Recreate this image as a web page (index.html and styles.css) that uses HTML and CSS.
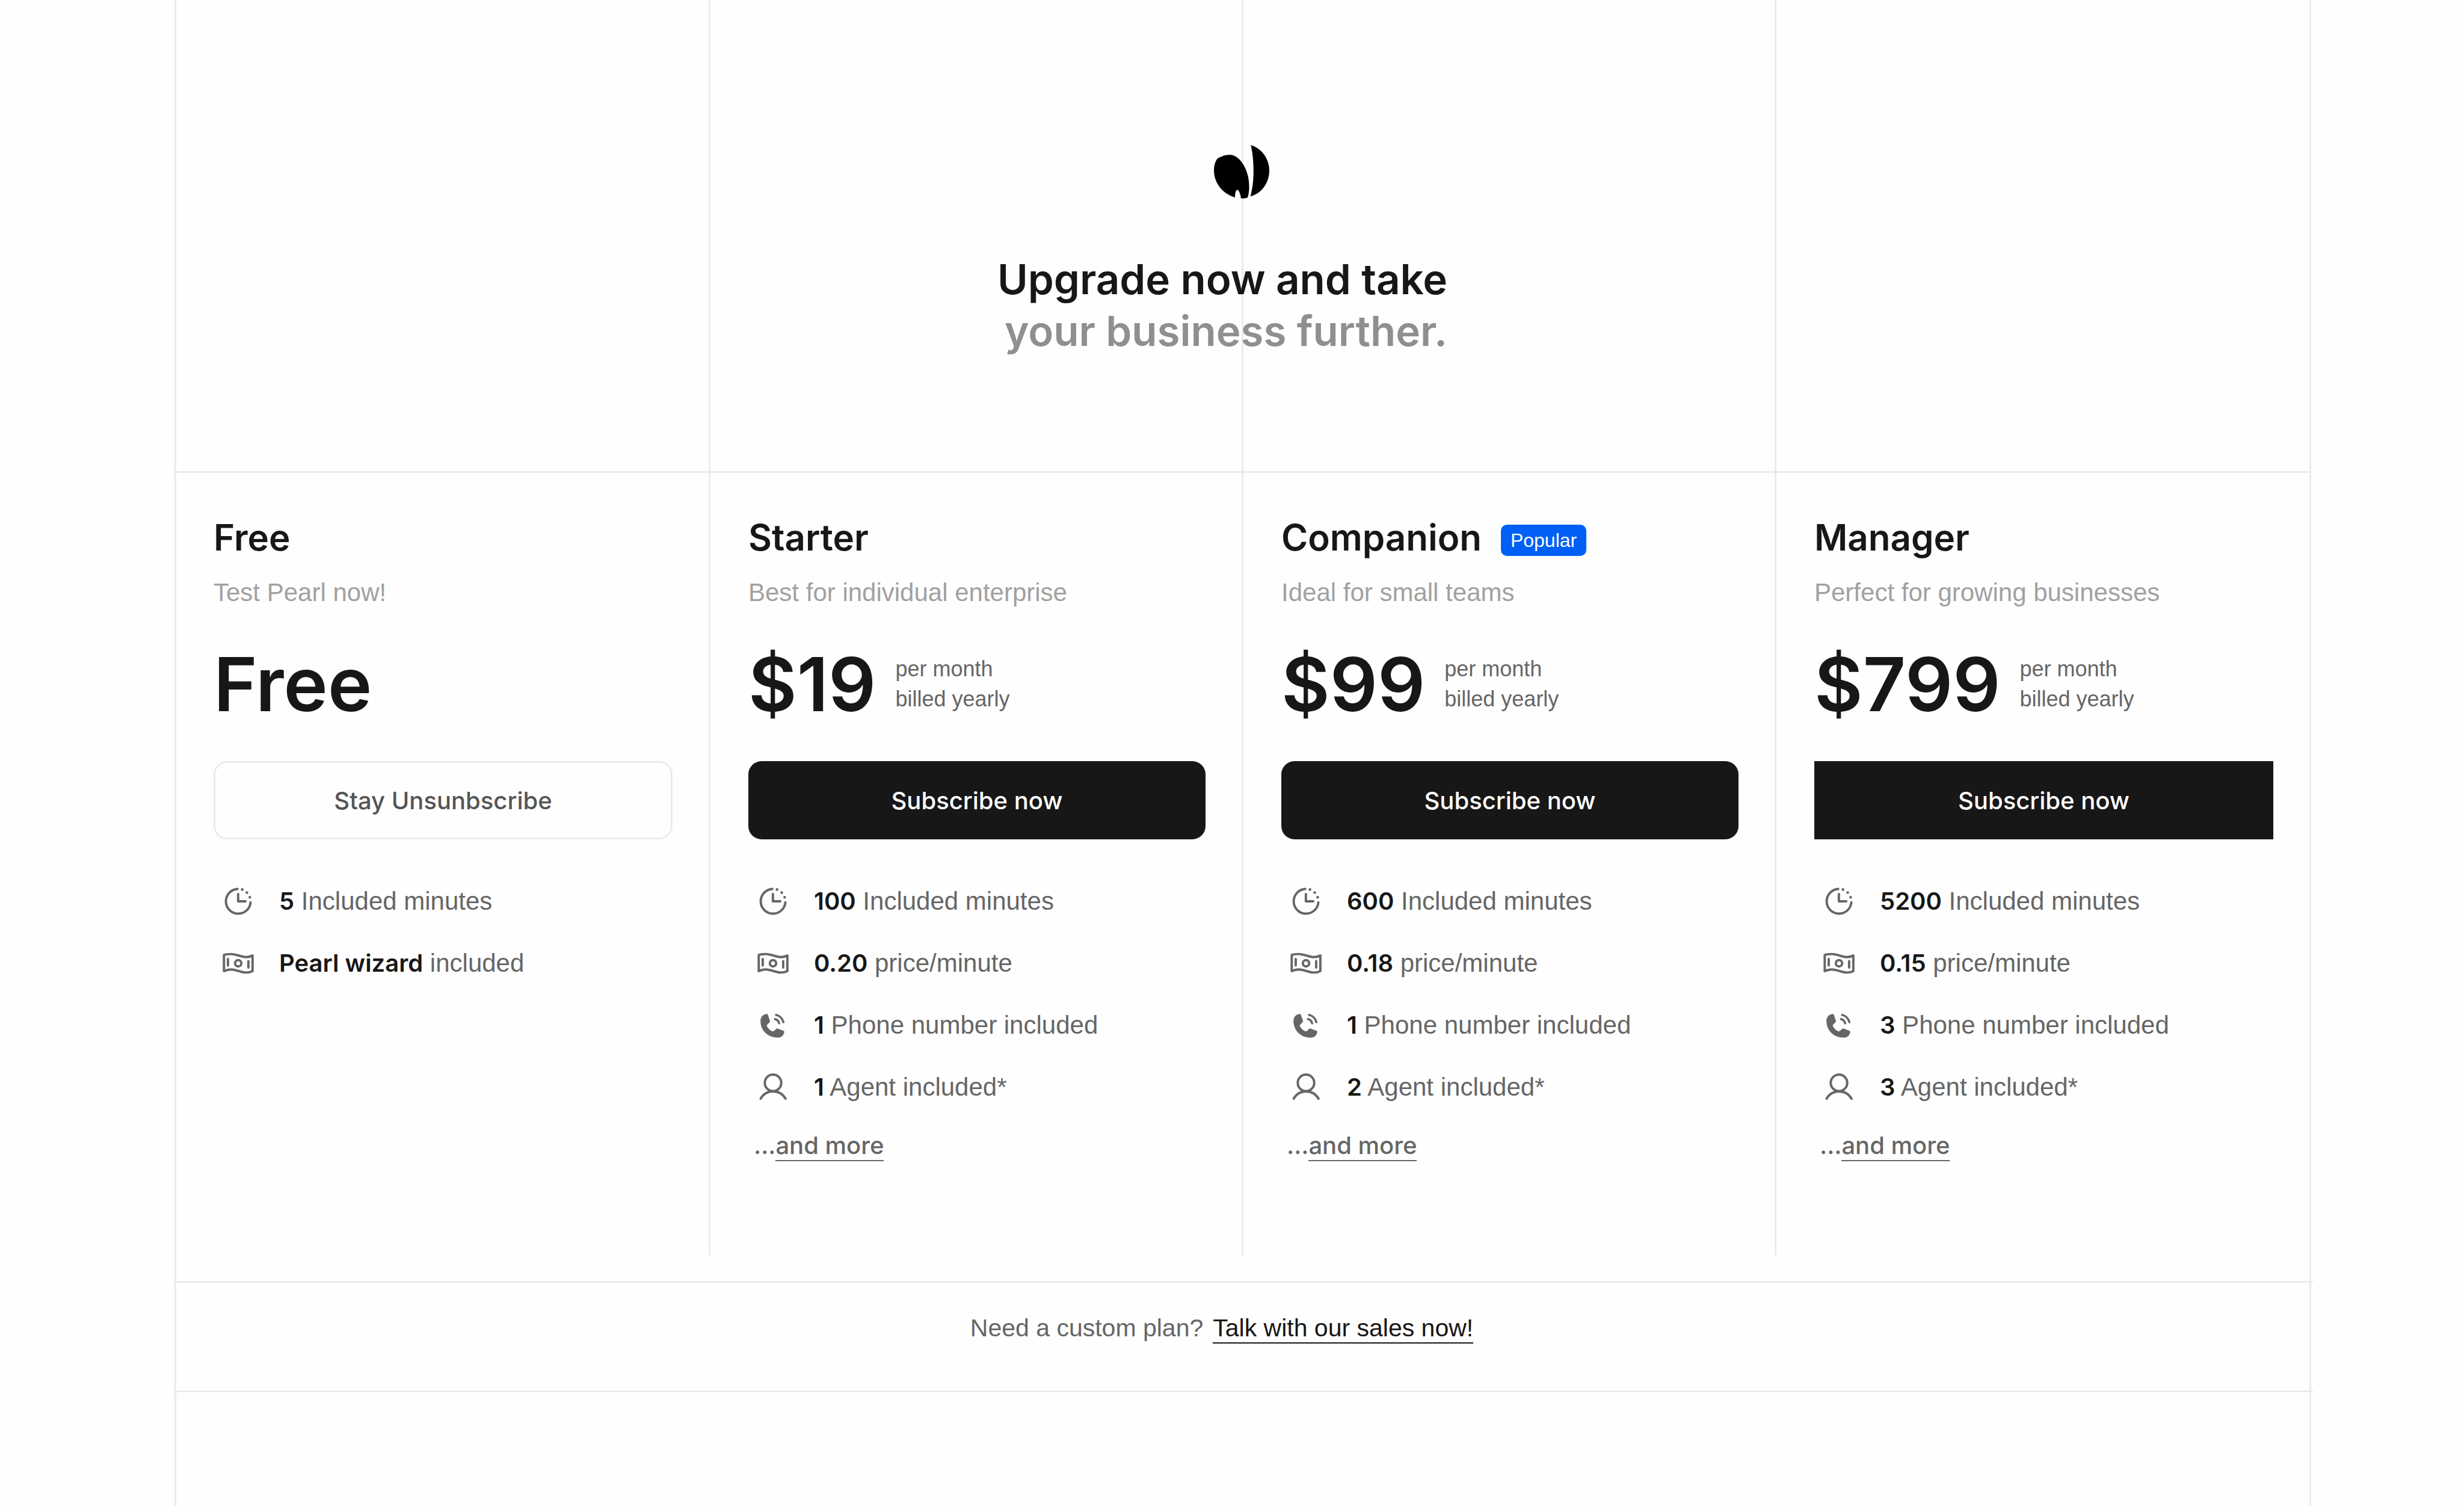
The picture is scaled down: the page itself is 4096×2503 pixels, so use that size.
FILE: index.html
```html
<!DOCTYPE html>
<html lang="en">
<head>
<meta charset="utf-8">
<title>Upgrade</title>
<link rel="stylesheet" href="styles.css">
</head>
<body>
<svg class="sprite" aria-hidden="true">
  <symbol id="clock" viewBox="29 41 212 212"><g fill="none" stroke="currentColor" stroke-width="13" stroke-linecap="round" stroke-linejoin="round"><path d="M131 79A68 68 0 1 0 203 153M134.500 107V147H175"/></g><g fill="currentColor"><circle cx="157" cy="82" r="7.500"/><circle cx="183" cy="99" r="7.500"/><circle cx="199" cy="125" r="7.500"/></g></symbol>
  <symbol id="money" viewBox="29 383 212 212"><g fill="none" stroke="currentColor" stroke-width="13" stroke-linecap="round" stroke-linejoin="round"><path d="M56.500 443C70 438 82 438 95 438C125 438 150 455 178 455C190 455 202 453 214 446V532C202 538 190 540 178 540C150 540 125 523 95 523C82 523 70 526 56.500 532ZM78.500 466V501M191 477V512"/><circle cx="135" cy="489" r="17.500"/></g></symbol>
  <symbol id="phone" viewBox="29 725 212 212"><path fill="currentColor" d="M99 769C103 768 106 770 107 774L118 806C119 809 118 811 117 813L102 829C100 832 100 834 102 837C107 848 118 859 131 864C133 865 136 864 138 863L154 850C156 848 159 848 161 849L193 862C196 863 198 866 197 869C193 889 179 900 160 899C104 899 66 858 66 806C66 786 80 771 99 769Z"/><path fill="none" stroke="currentColor" stroke-width="12" stroke-linecap="round" d="M152 774C171 778 187 794 192 814M146 797C158 800 166 809 169 820"/></symbol>
  <symbol id="person" viewBox="29 1067 212 212"><g fill="none" stroke="currentColor" stroke-width="13" stroke-linecap="round"><circle cx="135" cy="1149" r="45.500"/><path d="M67 1236C82 1210 106 1196 135 1196C164 1196 189 1210 204 1236"/></g></symbol>
</svg>

<main class="frame">
  <div class="board">
    <div class="lane col-1"></div>
    <div class="lane col-2"></div>
    <div class="lane col-3"></div>
    <div class="lane col-4"></div>

    <header class="hero">
      <svg class="logo" viewBox="105 80 305 295" role="img" aria-label="Pearl"><path d="M125 154C145 142 170 134 191 134C224 134 248 160 262 180C286 215 299 260 299 310C299 335 296 352 291 369C280 373 265 375 254 374C252 355 243 327 234 327C225 327 221 350 221 369C154 350 105 290 105 222C105 195 111 172 125 154Z"/><path d="M308 81C365 95 410 155 410 220C410 290 366 348 306 363C320 310 323 265 323 225C323 170 318 120 308 81Z"/></svg>
      <h1 class="headline">Upgrade now and take<br><span class="headline-soft">your business further.</span></h1>
    </header>

    <section class="plan col-1">
      <div class="plan-head"><h2 class="plan-name">Free</h2></div>
      <p class="plan-desc">Test Pearl now!</p>
      <div class="price"><strong class="amount">Free</strong></div>
      <button class="cta cta-outline" type="button">Stay Unsunbscribe</button>
      <ul class="features">
        <li class="feature"><svg class="icon"><use href="#clock"/></svg><span><b>5</b> Included minutes</span></li>
        <li class="feature"><svg class="icon"><use href="#money"/></svg><span><b>Pearl wizard</b> included</span></li>
      </ul>
    </section>

    <section class="plan col-2">
      <div class="plan-head"><h2 class="plan-name">Starter</h2></div>
      <p class="plan-desc">Best for individual enterprise</p>
      <div class="price"><strong class="amount">$19</strong><span class="period">per month<br>billed yearly</span></div>
      <button class="cta" type="button">Subscribe now</button>
      <ul class="features">
        <li class="feature"><svg class="icon"><use href="#clock"/></svg><span><b>100</b> Included minutes</span></li>
        <li class="feature"><svg class="icon"><use href="#money"/></svg><span><b>0.20</b> price/minute</span></li>
        <li class="feature"><svg class="icon"><use href="#phone"/></svg><span><b>1</b> Phone number included</span></li>
        <li class="feature"><svg class="icon"><use href="#person"/></svg><span><b>1</b> Agent included*</span></li>
      </ul>
      <p class="more">...<a class="more-link" href="#">and more</a></p>
    </section>

    <section class="plan col-3">
      <div class="plan-head"><h2 class="plan-name">Companion</h2><span class="badge">Popular</span></div>
      <p class="plan-desc">Ideal for small teams</p>
      <div class="price"><strong class="amount">$99</strong><span class="period">per month<br>billed yearly</span></div>
      <button class="cta" type="button">Subscribe now</button>
      <ul class="features">
        <li class="feature"><svg class="icon"><use href="#clock"/></svg><span><b>600</b> Included minutes</span></li>
        <li class="feature"><svg class="icon"><use href="#money"/></svg><span><b>0.18</b> price/minute</span></li>
        <li class="feature"><svg class="icon"><use href="#phone"/></svg><span><b>1</b> Phone number included</span></li>
        <li class="feature"><svg class="icon"><use href="#person"/></svg><span><b>2</b> Agent included*</span></li>
      </ul>
      <p class="more">...<a class="more-link" href="#">and more</a></p>
    </section>

    <section class="plan col-4">
      <div class="plan-head"><h2 class="plan-name">Manager</h2></div>
      <p class="plan-desc">Perfect for growing businesses</p>
      <div class="price"><strong class="amount">$799</strong><span class="period">per month<br>billed yearly</span></div>
      <button class="cta cta-square" type="button">Subscribe now</button>
      <ul class="features">
        <li class="feature"><svg class="icon"><use href="#clock"/></svg><span><b>5200</b> Included minutes</span></li>
        <li class="feature"><svg class="icon"><use href="#money"/></svg><span><b>0.15</b> price/minute</span></li>
        <li class="feature"><svg class="icon"><use href="#phone"/></svg><span><b>3</b> Phone number included</span></li>
        <li class="feature"><svg class="icon"><use href="#person"/></svg><span><b>3</b> Agent included*</span></li>
      </ul>
      <p class="more">...<a class="more-link" href="#">and more</a></p>
    </section>
  </div>

  <footer class="custom">
    <span>Need a custom plan?</span>
    <a class="custom-link" href="#">Talk with our sales now!</a>
  </footer>
</main>
</body>
</html>
```

FILE: styles.css
```css
:root {
  --ink: #171717;
  --text: #666;
  --soft: #a1a1a1;
  --line: #ebebeb;
  --paper: #fefefe;
  --display: Inter, "Liberation Sans", sans-serif;
}

* {
  box-sizing: border-box;
}

body,
h1,
h2,
p,
ul {
  margin: 0;
  padding: 0;
}

body {
  background: var(--paper);
  color: var(--text);
  font-family: "Liberation Sans", Arial, sans-serif;
  font-size: 42px;
  line-height: 48px;
}

.sprite {
  display: none;
}

.frame {
  min-height: 100vh;
  margin: 0 254px 0 290px;
  border: solid var(--line);
  border-width: 0 3px;
}

.board {
  display: grid;
  grid-template-columns: 885fr 886fr 886fr 889fr;
  grid-template-rows: 786px auto;
}

.col-1 { grid-column: 1; }
.col-2 { grid-column: 2; }
.col-3 { grid-column: 3; }
.col-4 { grid-column: 4; }

/* Column rules run behind the header and the plans */
.lane {
  grid-row: 1 / 3;
}

.lane + .lane {
  border-left: 3px solid var(--line);
}

.hero {
  grid-area: 1 / 1 / 2 / -1;
  display: flex;
  flex-direction: column;
  align-items: center;
  padding: 241px 4px 0 0;
  border-bottom: 3px solid var(--line);
}

.logo {
  width: 92px;
  height: 89px;
}

.headline {
  margin: 91px 64px 0 0;
  color: var(--ink);
  font-family: var(--display);
  font-size: 69px;
  font-weight: 600;
  line-height: 86px;
  text-align: right;
}

.headline-soft {
  color: #8f8f8f;
}

.plan {
  grid-row: 2;
  padding: 71px 60px 156px 66px;
}

.plan.col-1 {
  padding-left: 62px;
}

.plan-head {
  display: flex;
  align-items: center;
  gap: 32px;
}

.plan-name {
  color: var(--ink);
  font-family: var(--display);
  font-size: 60px;
  font-weight: 600;
  line-height: 72px;
}

.badge {
  margin-top: 10px;
  padding: 0 16px;
  border-radius: 10px;
  background: #0060f5;
  color: #fff;
  font-size: 32px;
  line-height: 52px;
}

.plan-desc {
  margin-top: 32px;
  color: var(--soft);
}

.price {
  display: flex;
  align-items: center;
  gap: 32px;
  height: 130px;
  margin-top: 63px;
}

.amount {
  color: var(--ink);
  font-family: var(--display);
  font-size: 124px;
  font-weight: 600;
  line-height: 130px;
}

.period {
  font-size: 36px;
  line-height: 50px;
}

.cta {
  display: block;
  width: 100%;
  height: 130px;
  margin-top: 63px;
  border: 0;
  border-radius: 22px;
  background: var(--ink);
  color: #fff;
  font-family: var(--display);
  font-size: 40px;
  font-weight: 500;
}

.cta-outline {
  border: 3px solid var(--line);
  background: var(--paper);
  color: #555;
}

.cta-square {
  border-radius: 0;
}

.features {
  margin-top: 51px;
  list-style: none;
}

.feature {
  display: flex;
  align-items: center;
  gap: 36px;
  height: 103px;
  padding-left: 9px;
}

.feature b {
  color: var(--ink);
  font-family: var(--display);
  font-size: 40px;
  font-weight: 600;
}

.icon {
  flex: none;
  width: 64px;
  height: 64px;
}

.more {
  margin-top: 22px;
  padding-left: 9px;
  font-family: var(--display);
  font-size: 40px;
  font-weight: 500;
}

.more-link {
  display: inline-block;
  border-bottom: 2px solid currentColor;
  color: inherit;
  text-decoration: none;
}

.custom {
  display: flex;
  justify-content: center;
  gap: 16px;
  height: 185px;
  margin: 43px -6px 0 0;
  padding: 51px 76px 0 0;
  border: solid var(--line);
  border-width: 3px 0;
  font-size: 41px;
}

.custom-link {
  align-self: flex-start;
  border-bottom: 2px solid currentColor;
  color: var(--ink);
  text-decoration: none;
}
```
